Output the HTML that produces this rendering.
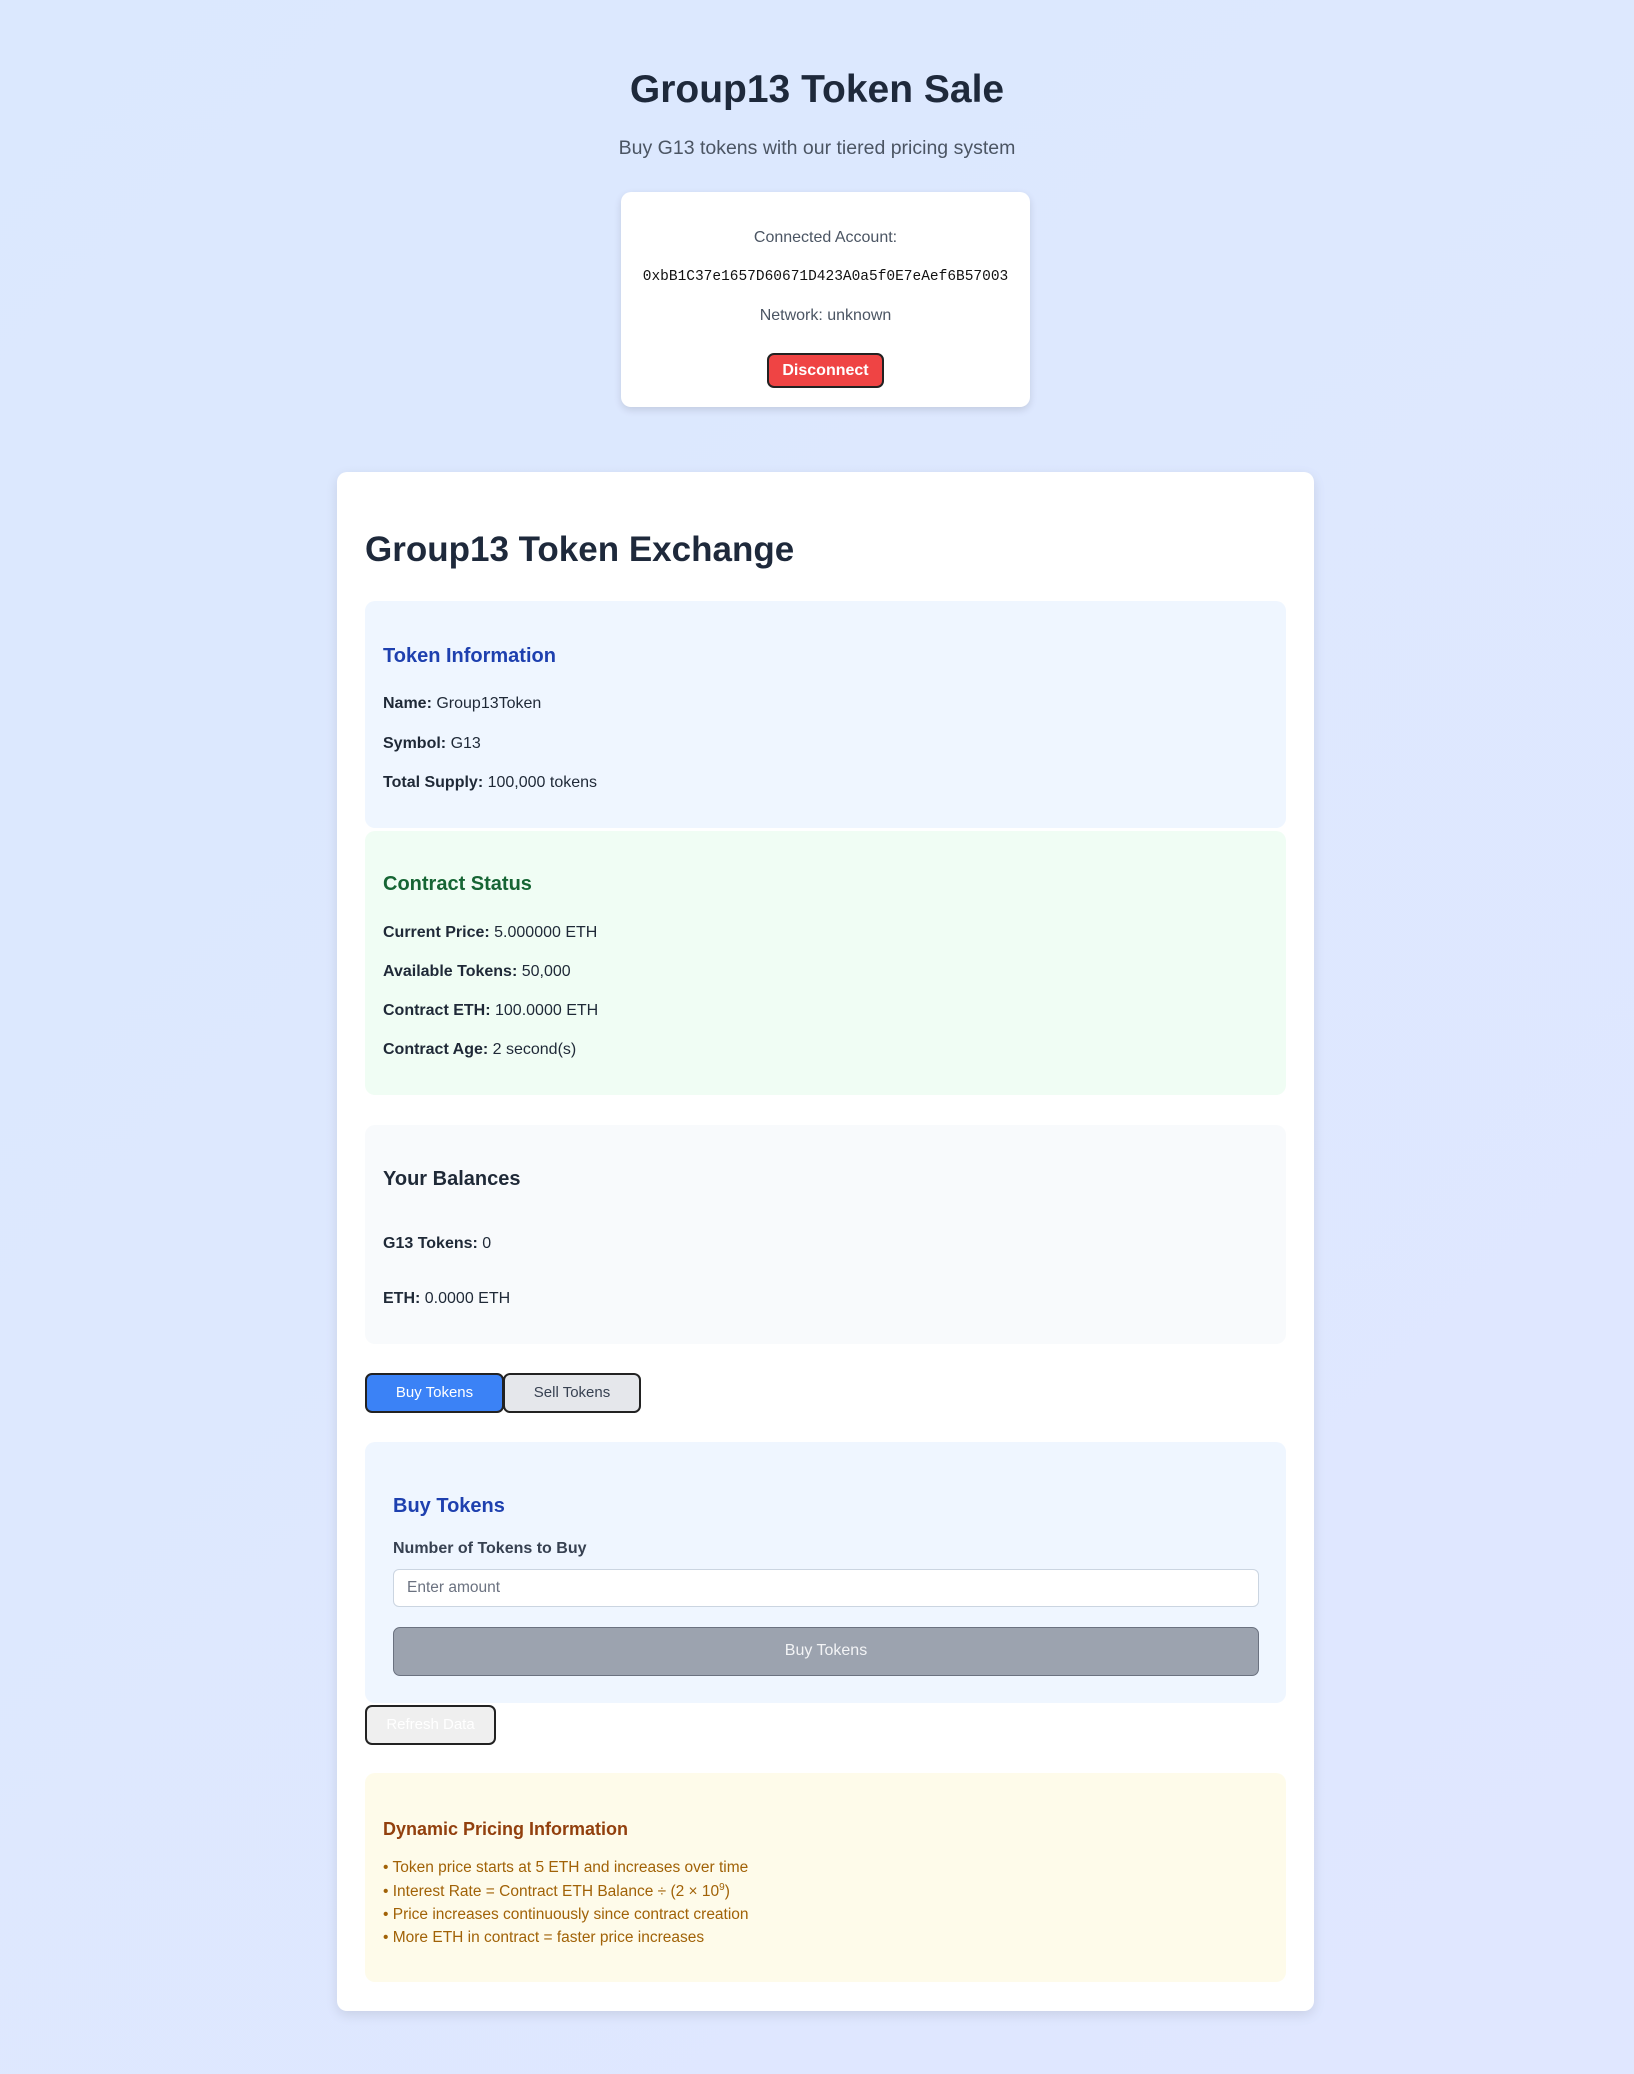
<!DOCTYPE html>
<html><head><meta charset="utf-8"><style>
*{margin:0;padding:0;box-sizing:border-box}
body{width:1634px;height:2074px;position:relative;overflow:hidden;font-family:"Liberation Sans",sans-serif;background:linear-gradient(135deg,#dbe8fe 0%,#e0e7ff 100%);color:#1f2937}
.a{position:absolute;line-height:24px;white-space:nowrap}
.box{position:absolute;border-radius:10px}
b{font-weight:bold}
.t{font-size:16px;color:#1f2937}
.btn{position:absolute;border:2px solid #222;border-radius:7px;font-size:15px;text-align:center}
sup{font-size:10px;line-height:0;vertical-align:6px}
</style></head><body>
<div class="a" style="left:0;width:1634px;text-align:center;top:68px;line-height:44px;font-size:39px;font-weight:bold;color:#1e293b">Group13 Token Sale</div>
<div class="a" style="left:0;width:1634px;text-align:center;top:136px;font-size:19.5px;color:#4b5563">Buy G13 tokens with our tiered pricing system</div>

<div class="box" style="left:621px;top:192px;width:409px;height:215px;background:#fff;box-shadow:0 3px 8px rgba(0,0,0,.12)"></div>
<div class="a" style="left:621px;width:409px;text-align:center;top:226px;font-size:16px;color:#4b5563">Connected Account:</div>
<div class="a" style="left:621px;width:409px;text-align:center;top:265px;font-size:14.5px;font-family:'Liberation Mono',monospace;color:#111">0xbB1C37e1657D60671D423A0a5f0E7eAef6B57003</div>
<div class="a" style="left:621px;width:409px;text-align:center;top:304px;font-size:16px;color:#4b5563">Network: unknown</div>
<div class="btn" style="left:767px;top:353px;width:117px;height:35px;background:#ef4444;color:#fff;font-weight:bold;line-height:31px;font-size:16px">Disconnect</div>

<div class="box" style="left:337px;top:472px;width:977px;height:1539px;background:#fff;box-shadow:0 4px 12px rgba(0,0,0,.1)"></div>
<div class="a" style="left:365px;top:528px;line-height:44px;font-size:35px;font-weight:bold;color:#1e293b">Group13 Token Exchange</div>

<div class="box" style="left:365px;top:601px;width:921px;height:227px;background:#eff6ff"></div>
<div class="a" style="left:383px;top:644px;font-size:20px;font-weight:bold;color:#1e40af">Token Information</div>
<div class="a t" style="left:383px;top:692px"><b>Name:</b> Group13Token</div>
<div class="a t" style="left:383px;top:732px"><b>Symbol:</b> G13</div>
<div class="a t" style="left:383px;top:771px"><b>Total Supply:</b> 100,000 tokens</div>

<div class="box" style="left:365px;top:831px;width:921px;height:264px;background:#f0fdf4"></div>
<div class="a" style="left:383px;top:872px;font-size:20px;font-weight:bold;color:#166534">Contract Status</div>
<div class="a t" style="left:383px;top:921px"><b>Current Price:</b> 5.000000 ETH</div>
<div class="a t" style="left:383px;top:960px"><b>Available Tokens:</b> 50,000</div>
<div class="a t" style="left:383px;top:999px"><b>Contract ETH:</b> 100.0000 ETH</div>
<div class="a t" style="left:383px;top:1038px"><b>Contract Age:</b> 2 second(s)</div>

<div class="box" style="left:365px;top:1125px;width:921px;height:219px;background:#f8fafc"></div>
<div class="a" style="left:383px;top:1167px;font-size:20px;font-weight:bold;color:#1f2937">Your Balances</div>
<div class="a t" style="left:383px;top:1232px"><b>G13 Tokens:</b> 0</div>
<div class="a t" style="left:383px;top:1287px"><b>ETH:</b> 0.0000 ETH</div>

<div class="btn" style="left:365px;top:1373px;width:139px;height:40px;background:#3b82f6;color:#fff;line-height:36px">Buy Tokens</div>
<div class="btn" style="left:503px;top:1373px;width:138px;height:40px;background:#e5e7eb;color:#374151;line-height:36px">Sell Tokens</div>

<div class="box" style="left:365px;top:1442px;width:921px;height:261px;background:#eff6ff"></div>
<div class="a" style="left:393px;top:1494px;font-size:20px;font-weight:bold;color:#1e40af">Buy Tokens</div>
<div class="a" style="left:393px;top:1537px;font-size:16px;font-weight:bold;color:#374151">Number of Tokens to Buy</div>
<div style="position:absolute;left:393px;top:1569px;width:866px;height:38px;background:#fff;border:1.5px solid #cbd5e1;border-radius:6px"></div>
<div class="a" style="left:407px;top:1576px;font-size:15.5px;color:#6b7280">Enter amount</div>
<div style="position:absolute;left:393px;top:1627px;width:866px;height:49px;background:#9ca3af;border:1.5px solid #6b7280;border-radius:7px;color:#f3f4f6;font-size:16px;text-align:center;line-height:46px">Buy Tokens</div>
<div class="btn" style="left:365px;top:1705px;width:131px;height:40px;background:#efefef;color:#fff;line-height:36px">Refresh Data</div>

<div class="box" style="left:365px;top:1773px;width:921px;height:209px;background:#fefbea"></div>
<div class="a" style="left:383px;top:1817px;font-size:18px;font-weight:bold;color:#92400e">Dynamic Pricing Information</div>
<div class="a" style="left:383px;top:1856px;font-size:15.5px;color:#a16207">• Token price starts at 5 ETH and increases over time</div>
<div class="a" style="left:383px;top:1880px;font-size:15.5px;color:#a16207">• Interest Rate = Contract ETH Balance ÷ (2 × 10<sup>9</sup>)</div>
<div class="a" style="left:383px;top:1903px;font-size:15.5px;color:#a16207">• Price increases continuously since contract creation</div>
<div class="a" style="left:383px;top:1926px;font-size:15.5px;color:#a16207">• More ETH in contract = faster price increases</div>
</body></html>
